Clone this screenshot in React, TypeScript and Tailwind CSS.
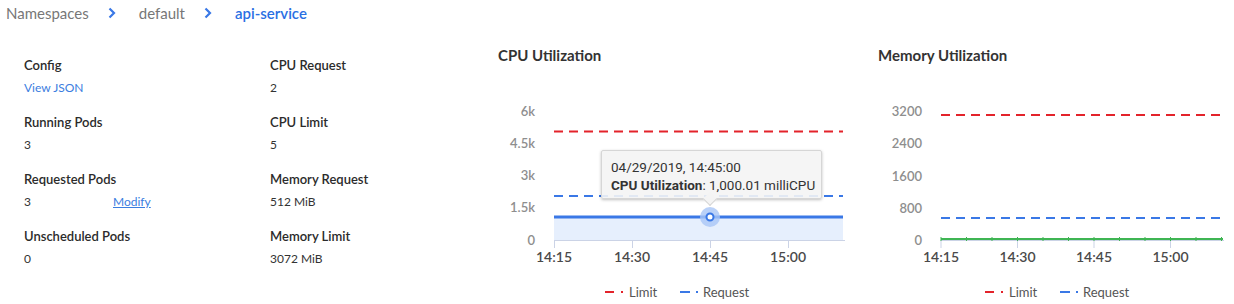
import React from "react";

const RED = "#e3232b";
const BLUE = "#3a78e6";

function Chevron() {
  return (
    <svg width="8" height="12" viewBox="0 0 8 12" className="ml-[19px] mr-[23px]">
      <path d="M1.5 1.5 L6 6 L1.5 10.5" fill="none" stroke={BLUE} strokeWidth="2.2" />
    </svg>
  );
}

function Detail({ label, children }: { label: string; children: React.ReactNode }) {
  return (
    <div className="flex flex-col">
      <div className="text-[13px] leading-[20px] font-semibold text-[#2b2b2b]">{label}</div>
      <div className="mt-[3px] text-[12px] leading-[20px] text-[#333]">{children}</div>
    </div>
  );
}

function Legend() {
  return (
    <g fontSize="13" fill="#555">
      <line x1="125" y1="227" x2="134" y2="227" stroke={RED} strokeWidth="2" />
      <rect x="141" y="226" width="2" height="2" fill={RED} />
      <text x="149" y="227" dominantBaseline="central">Limit</text>
      <line x1="200" y1="227" x2="210" y2="227" stroke={BLUE} strokeWidth="2" />
      <rect x="216" y="226" width="2" height="2" fill={BLUE} />
      <text x="223" y="227" dominantBaseline="central">Request</text>
    </g>
  );
}

function CpuChart() {
  const yl = [
    ["6k", 46],
    ["4.5k", 78],
    ["3k", 110],
    ["1.5k", 142],
    ["0", 175],
  ] as const;
  const xt = [
    ["14:15", 74],
    ["14:30", 152],
    ["14:45", 230],
    ["15:00", 308],
  ] as const;
  return (
    <svg width="380" height="239" className="block">
      <g fontSize="13" fontWeight="600" fill="#8e8e8e" textAnchor="end">
        {yl.map(([t, y]) => (
          <text key={t} x="55" y={y} dominantBaseline="central">{t}</text>
        ))}
      </g>
      <rect x="74" y="152" width="289" height="23" fill="#e6effd" />
      <line x1="74" y1="66.5" x2="363" y2="66.5" stroke={RED} strokeWidth="2" strokeDasharray="9 6" />
      <line x1="74" y1="131" x2="363" y2="131" stroke={BLUE} strokeWidth="2" strokeDasharray="9 6" />
      <line x1="74" y1="175.5" x2="365" y2="175.5" stroke="#cbd3e6" strokeWidth="1" />
      {xt.map(([t, x]) => (
        <line key={t} x1={x + 0.5} y1="175" x2={x + 0.5} y2="183" stroke="#cbd3e6" />
      ))}
      <line x1="74" y1="152" x2="363" y2="152" stroke={BLUE} strokeWidth="3" />
      <circle cx="230" cy="152" r="10" fill="#a9c6f6" opacity="0.8" />
      <circle cx="230" cy="152" r="3.5" fill="#fff" stroke={BLUE} strokeWidth="2" />
      <g fontSize="14" fontWeight="600" fill="#4a4a4a" textAnchor="middle">
        {xt.map(([t, x]) => (
          <text key={t} x={x} y="191" dominantBaseline="central">{t}</text>
        ))}
      </g>
      <Legend />
    </svg>
  );
}

function MemChart() {
  const yl = [
    ["3200", 46],
    ["2400", 78],
    ["1600", 111],
    ["800", 143],
    ["0", 175],
  ] as const;
  const xt = [
    ["14:15", 81],
    ["14:30", 157.5],
    ["14:45", 234],
    ["15:00", 310.5],
  ] as const;
  const marks = Array.from({ length: 12 }, (_, i) => 81 + i * 25.5);
  return (
    <svg width="374" height="239" className="block">
      <g fontSize="13" fontWeight="600" fill="#8e8e8e" textAnchor="end">
        {yl.map(([t, y]) => (
          <text key={t} x="62" y={y} dominantBaseline="central">{t}</text>
        ))}
      </g>
      <line x1="81" y1="50" x2="362" y2="50" stroke={RED} strokeWidth="2" strokeDasharray="9 6" />
      <line x1="81" y1="153" x2="362" y2="153" stroke={BLUE} strokeWidth="2" strokeDasharray="9 6" />
      <line x1="81" y1="175.5" x2="364" y2="175.5" stroke="#cbd3e6" strokeWidth="1" />
      {xt.map(([t, x]) => (
        <line key={t} x1={x} y1="175" x2={x} y2="183" stroke="#cbd3e6" />
      ))}
      <line x1="81" y1="174" x2="363" y2="174" stroke="#3fb553" strokeWidth="2" />
      {marks.map((x) => (
        <rect key={x} x={x - 0.5} y="172" width="1" height="4" fill="#3fb553" />
      ))}
      <g fontSize="14" fontWeight="600" fill="#4a4a4a" textAnchor="middle">
        {xt.map(([t, x]) => (
          <text key={t} x={x} y="191" dominantBaseline="central">{t}</text>
        ))}
      </g>
      <Legend />
    </svg>
  );
}

export default function App() {
  return (
    <div className="w-[1234px] h-[304px] bg-white overflow-hidden font-['Lato',sans-serif]">
      <nav className="h-[26px] flex items-center pl-[6px] text-[15px] leading-[24px]">
        <span className="text-[#777]">Namespaces</span>
        <Chevron />
        <span className="text-[#777]">default</span>
        <Chevron />
        <span className="text-[#2a6fe3] font-semibold">api-service</span>
      </nav>
      <div className="flex">
        <div className="w-[480px] pl-[24px] pt-[29px] grid grid-cols-[246px_1fr] gap-y-[14px] content-start">
          <Detail label="Config">
            <span className="text-[#3b7de0]">View JSON</span>
          </Detail>
          <Detail label="CPU Request">2</Detail>
          <Detail label="Running Pods">3</Detail>
          <Detail label="CPU Limit">5</Detail>
          <Detail label="Requested Pods">
            <span className="flex">
              <span className="w-[89px]">3</span>
              <span className="text-[#3b7de0] underline">Modify</span>
            </span>
          </Detail>
          <Detail label="Memory Request">512 MiB</Detail>
          <Detail label="Unscheduled Pods">0</Detail>
          <Detail label="Memory Limit">3072 MiB</Detail>
        </div>
        <div className="w-[380px] relative">
          <div className="pl-[18px] pt-[19px] h-[39px] text-[15px] leading-[20px] font-bold text-[#333]">
            CPU Utilization
          </div>
          <CpuChart />
          <div className="absolute left-[121px] top-[124px] w-[221px] h-[49px] bg-[#f4f4f4]/90 border border-[#d6d6d6] rounded-[2px] shadow-[0_1px_3px_rgba(0,0,0,0.25)] pl-[9px] pt-[7px] whitespace-nowrap font-['Roboto',sans-serif] text-[13.5px] leading-[18px] text-[#333]">
            <div>04/29/2019, 14:45:00</div>
            <div>
              <span className="font-bold">CPU Utilization</span>: 1,000.01 milliCPU
            </div>
            <div className="absolute left-[103px] bottom-[-6px] w-[10px] h-[10px] rotate-45 bg-[#f4f4f4] border-r border-b border-[#d6d6d6]" />
          </div>
        </div>
        <div className="w-[374px]">
          <div className="pl-[18px] pt-[19px] h-[39px] text-[15px] leading-[20px] font-bold text-[#333]">
            Memory Utilization
          </div>
          <MemChart />
        </div>
      </div>
    </div>
  );
}
